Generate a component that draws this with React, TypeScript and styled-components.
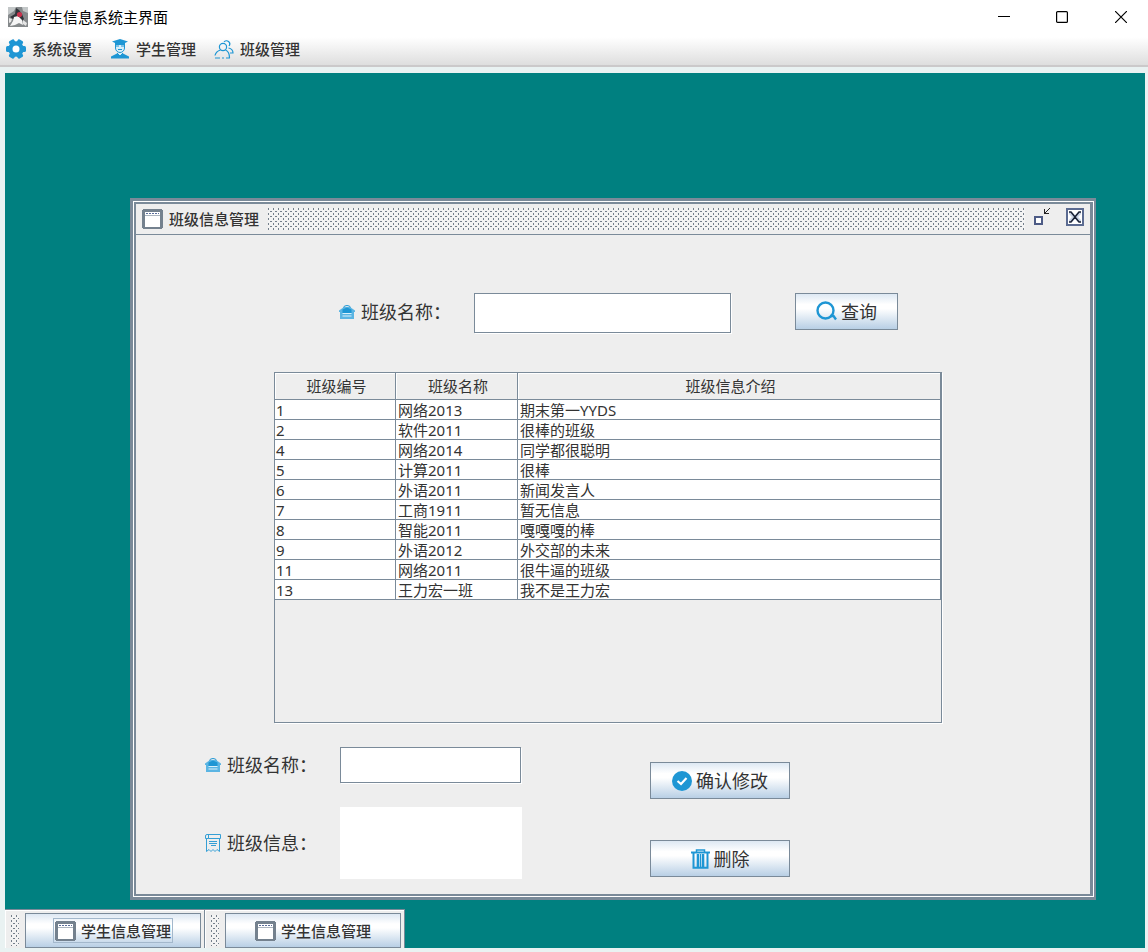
import React from "react";
import styled, { createGlobalStyle, css } from "styled-components";

const steel = "#7a8a99";
const panel = "#eeeeee";
const blue = "#1e96d4";

const GlobalStyle = createGlobalStyle`
  *, *::before, *::after { box-sizing: border-box; }
  body {
    margin: 0;
    background: #fff;
    color: #333;
    font-family: "Noto Sans", "Noto Sans CJK SC", sans-serif;
    font-size: 15px;
    line-height: 20px;
  }
  button, input, textarea { font: inherit; color: inherit; }
`;

const bumps = css`
  background-color: #f3f3f3;
  background-image: url("data:image/svg+xml,%3Csvg xmlns='http://www.w3.org/2000/svg' width='5' height='5' shape-rendering='crispEdges'%3E%3Cpath fill='%23747f8b' d='M0 0h1v2H0zM2 3h2v1H2z'/%3E%3C/svg%3E");
`;

const AppWindow = styled.div`
  min-height: 100vh;
  display: flex;
  flex-direction: column;
  background: #e9f2f2;
`;

const WindowBar = styled.header`
  display: flex;
  align-items: center;
  gap: 5px;
  height: 34px;
  padding: 0 20px 0 8px;
  background: #fff;
`;

const WindowTitle = styled.h1`
  flex: 1;
  margin: 0;
  font-size: 15px;
  font-weight: 400;
  color: #000;
`;

const WindowControls = styled.div`
  display: flex;
  gap: 34px;
`;

const ControlButton = styled.button`
  display: flex;
  align-items: center;
  justify-content: center;
  width: 24px;
  height: 24px;
  padding: 0;
  border: 0;
  background: transparent;

  &:last-child { width: 14px; margin-left: 6px; }
`;

const MenuBar = styled.nav`
  display: flex;
  gap: 18px;
  height: 33px;
  padding: 0 6px;
  background: linear-gradient(#fff 10%, #dedede);
  border-bottom: 2px solid #cbc9ca;
`;

const MenuButton = styled.button`
  display: flex;
  align-items: center;
  gap: 6px;
  height: 29px;
  padding: 0;
  border: 0;
  background: transparent;
  font-weight: 500;
`;

const Desktop = styled.main`
  flex: 1;
  display: flex;
  flex-direction: column;
  margin: 6px 3px 4px 5px;
  background: #008080;
`;

const InternalFrame = styled.section`
  flex: 1;
  display: flex;
  margin: 125px 49px 9px 125px;
  padding: 1px;
  background: #fff;
  border: solid ${steel};
  border-width: 3px 2px 3px 3px;
`;

const FrameBody = styled.div`
  flex: 1;
  display: flex;
  flex-direction: column;
  background: ${panel};
  border: solid ${steel};
  border-width: 2px 3px 2px 2px;
`;

const FrameTitleBar = styled.header`
  display: flex;
  align-items: center;
  gap: 6px;
  height: 31px;
  padding: 0 5px 0 6px;
  border-bottom: 1px solid ${steel};
`;

const FrameTitle = styled.h2`
  margin: 0;
  font-size: 15px;
  font-weight: 500;
`;

const TitleBumps = styled.div`
  flex: 1;
  height: 22px;
  margin-left: 3px;
  ${bumps}
`;

const FrameControl = styled.button`
  display: flex;
  width: 20px;
  height: 22px;
  margin-left: 2px;
  padding: 0;
  border: 0;
  background: transparent;

  & + & { margin-left: 6px; }
`;

const Content = styled.div`
  flex: 1;
  display: flex;
  flex-direction: column;
  padding: 58px 0 15px;
`;

const SearchRow = styled.form`
  display: flex;
  align-items: flex-start;
  margin-left: 203px;
`;

const FieldLabel = styled.label`
  display: flex;
  align-items: center;
  gap: 6px;
  width: 135px;
  height: 38px;
  font-size: 18px;
  line-height: 24px;
`;

const inputFrame = css`
  display: block;
  padding: 0 4px;
  border: 1px solid ${steel};
  border-radius: 0;
  background: #fff;
  box-shadow: 1px 1px 0 #fff;
  font-size: 18px;
  outline: 0;
`;

const TextInput = styled.input<{ $width: number; $height: number }>`
  ${inputFrame}
  width: ${(p) => p.$width}px;
  height: ${(p) => p.$height}px;
`;

const TextArea = styled.textarea`
  ${inputFrame}
  width: 182px;
  height: 72px;
  border: 0;
  box-shadow: none;
  resize: none;
`;

const metal = css`
  display: flex;
  align-items: center;
  justify-content: center;
  padding: 0;
  border: 1px solid ${steel};
  border-radius: 0;
  background: linear-gradient(#dde8f3, #fff 30%, #fff 42%, #b8cfe5);
`;

const ActionButton = styled.button<{ $width: number }>`
  ${metal}
  gap: 4px;
  width: ${(p) => p.$width}px;
  height: 37px;
  font-size: 18px;
  line-height: 24px;
`;

const SearchAction = styled.div`
  margin-left: 64px;
`;

const ScrollPane = styled.div`
  flex: 1;
  min-height: 260px;
  margin: 39px 148px 24px 138px;
  border: 1px solid ${steel};
  box-shadow: 1px 1px 0 #fff;
`;

const DataTable = styled.table`
  width: 100%;
  table-layout: fixed;
  border-collapse: separate;
  border-spacing: 0;

  th, td {
    border: solid ${steel};
    border-width: 0 1px 1px 0;
    white-space: nowrap;
    overflow: hidden;
  }
  th {
    height: 27px;
    padding: 0 1px 0 4px;
    font-weight: 400;
    box-shadow: inset 1px 1px 0 #fff;
    background: ${panel};
  }
  td {
    height: 20px;
    padding: 2px 1px 0 2px;
    line-height: 17px;
    background: #fff;
  }
  td:first-child { padding-left: 1px; }
`;

const Column = styled.col<{ $width?: number }>`
  width: ${(p) => (p.$width ? `${p.$width}px` : "auto")};
`;

const EditArea = styled.form`
  display: flex;
  align-items: flex-start;
  gap: 128px;
  margin-left: 69px;
`;

const FieldStack = styled.div`
  display: flex;
  flex-direction: column;
  gap: 24px;
`;

const Field = styled.div`
  display: flex;
  align-items: center;
  height: 36px;

  & + & { height: 72px; }
`;

const ButtonStack = styled.div`
  display: flex;
  flex-direction: column;
  gap: 41px;
  padding-top: 15px;
`;

const TaskBar = styled.footer`
  display: flex;
`;

const TaskItem = styled.div`
  display: flex;
  align-items: stretch;
  gap: 6px;
  width: 200px;
  height: 39px;
  padding: 3px 3px 0 6px;
  border: solid ${steel};
  border-width: 1px 1px 0 0;
  background: ${panel};
  box-shadow: inset 1px 1px 0 #fff;
`;

const TaskGrip = styled.div`
  width: 8px;
  margin: 2px 0;
  ${bumps}
`;

const TaskButton = styled.button`
  ${metal}
  flex: 1;
`;

const TaskCaption = styled.span<{ $focused?: boolean }>`
  display: flex;
  align-items: center;
  gap: 5px;
  height: 25px;
  padding: 0 1px;
  border: 1px solid ${(p) => (p.$focused ? "#a3b8cc" : "transparent")};
  font-weight: 500;
`;

const DukeIcon = () => (
  <svg width="20" height="20" viewBox="0 0 20 20" aria-hidden="true">
    <rect width="20" height="20" fill="#85898b" />
    <path d="M0 0h8L6 4 0 8zM14 0h6v6l-5-2z" fill="#c3c7c8" />
    <path d="M8 1l3 2 3 4 2 5-2 2-4-3-5 1-3-2 5-3z" fill="#30343a" />
    <path d="M6 10l4-1 4 4 1 5-4-2-4 2-5 1 3-5z" fill="#f5f5f5" />
    <path d="M15 13l4 3-1 3-3-2zM1 11l3 1-1 3-2 1z" fill="#e6e6e6" />
    <circle cx="11.500" cy="7.500" r="2.600" fill="#c8324c" />
  </svg>
);

const GearIcon = () => (
  <svg width="20" height="20" viewBox="0 0 20 20" aria-hidden="true">
    <g fill={blue}>
      <circle cx="10" cy="10" r="7.800" />
      <rect x="0" y="7" width="20" height="6" rx="1.500" />
      <rect x="0" y="7" width="20" height="6" rx="1.500" transform="rotate(60 10 10)" />
      <rect x="0" y="7" width="20" height="6" rx="1.500" transform="rotate(120 10 10)" />
    </g>
    <circle cx="10" cy="10" r="3.500" fill="#fff" />
  </svg>
);

const StudentIcon = () => (
  <svg width="20" height="20" viewBox="0 0 20 20" aria-hidden="true">
    <path d="M2 2.500L10 0l8 2.500L15 4v2H5V4z" fill={blue} />
    <path d="M5.500 6v3a4.500 4.500 0 0 0 9 0V6" fill="#d8eef9" stroke={blue} />
    <path d="M6 7h3M11 7h3M8 10.500h4" stroke={blue} />
    <path d="M1 19.500v-2l6-3 3 2 3-2 6 3v2z" fill={blue} />
    <path d="M7 14l3 3 3-3" fill="#d8eef9" stroke={blue} />
  </svg>
);

const GroupIcon = () => (
  <svg width="20" height="20" viewBox="0 0 20 20" fill="none" stroke={blue} strokeWidth="1.200" aria-hidden="true">
    <circle cx="9" cy="8" r="3.600" />
    <path d="M10 3a3.200 3.200 0 1 1 5 4M14.500 9c2.500.5 4.500 2.500 4.500 5h-3M6.500 11c-3 1-5 3-5.500 5.500" />
    <path d="M11.500 11c2.500 1 4 4 4 8" />
    <path d="M1 19h5M8 19h2M12 19h4" />
  </svg>
);

const FrameIcon = () => (
  <svg width="21" height="20" viewBox="0 0 21 20" shapeRendering="crispEdges" aria-hidden="true">
    <path d="M1 0h19v1h1v18h-1v1H1v-1H0V1h1z" fill="#74818e" />
    <path d="M3 3h15v3H3zM3 7h15v11H3z" fill="#fff" />
    <path d="M4 4.500h13" stroke="#5a6d9a" strokeDasharray="2 1" />
    <path d="M3 6.500h15" stroke="#aab4bf" />
  </svg>
);

const HouseIcon = () => (
  <svg width="16" height="14" viewBox="0 0 16 14" aria-hidden="true">
    <path d="M4.500 3a3.500 2.500 0 0 1 7 0" fill="none" stroke={blue} />
    <path d="M0 5.500L5 2h6l5 3.500V7h-1v7H1V7H0z" fill="#5bb5e3" />
    <path d="M3.500 4.500L8 2.500l4.500 2V8h-9z" fill={blue} />
    <path d="M3.500 8.500h9M3.500 11h9" stroke="#d9f0fb" />
  </svg>
);

const NoteIcon = () => (
  <svg width="16" height="18" viewBox="0 0 16 18" fill="none" stroke="#359fd5" aria-hidden="true">
    <path d="M3.500 4.500h12v-4H2a1.500 1.500 0 0 0-1.500 1.500v2.500h3V1" />
    <path d="M1.500 4.500v13l2.500-2 2 2 2-2 2 2 2-2 2.500 2v-13" />
    <path d="M4 7.500h8M4 9.500h8M6 11.500h5" />
  </svg>
);

const SearchIcon = () => (
  <svg width="21" height="21" viewBox="0 0 21 21" fill="none" stroke={blue} strokeWidth="2.400" aria-hidden="true">
    <circle cx="9.500" cy="9.500" r="8" />
    <path d="M14 15h3.500L20 18.500" />
  </svg>
);

const CheckIcon = () => (
  <svg width="20" height="20" viewBox="0 0 20 20" aria-hidden="true">
    <circle cx="10" cy="10" r="10" fill={blue} />
    <path d="M5.500 10l3.500 3L14.500 7" fill="none" stroke="#fff" strokeWidth="2.200" />
  </svg>
);

const TrashIcon = () => (
  <svg width="19" height="20" viewBox="0 0 19 20" fill="none" stroke={blue} aria-hidden="true">
    <path d="M0 3.500h19" strokeWidth="2" />
    <path d="M5.500 3V1h8v2" strokeWidth="1.500" />
    <path d="M2.500 4v14.800h14V4" strokeWidth="2" />
    <path d="M7 5v13M12 5v13" strokeWidth="2.600" />
    <path d="M9.500 5v13" strokeWidth="1" />
  </svg>
);

const rows = [
  ["1", "网络2013", "期末第一YYDS"],
  ["2", "软件2011", "很棒的班级"],
  ["4", "网络2014", "同学都很聪明"],
  ["5", "计算2011", "很棒"],
  ["6", "外语2011", "新闻发言人"],
  ["7", "工商1911", "暂无信息"],
  ["8", "智能2011", "嘎嘎嘎的棒"],
  ["9", "外语2012", "外交部的未来"],
  ["11", "网络2011", "很牛逼的班级"],
  ["13", "王力宏一班", "我不是王力宏"],
];

export default function App() {
  return (
    <>
      <GlobalStyle />
      <AppWindow>
        <WindowBar>
          <DukeIcon />
          <WindowTitle>学生信息系统主界面</WindowTitle>
          <WindowControls>
            <ControlButton type="button" aria-label="最小化">
              <svg width="12" height="12" shapeRendering="crispEdges"><path d="M0 5.500h12" stroke="#000" /></svg>
            </ControlButton>
            <ControlButton type="button" aria-label="最大化">
              <svg width="12" height="12"><rect x=".6" y=".6" width="10.800" height="10.800" rx="1" fill="none" stroke="#000" strokeWidth="1.200" /></svg>
            </ControlButton>
            <ControlButton type="button" aria-label="关闭">
              <svg width="12" height="12"><path d="M0 0l12 12M12 0L0 12" stroke="#000" strokeWidth="1.200" /></svg>
            </ControlButton>
          </WindowControls>
        </WindowBar>
        <MenuBar>
          <MenuButton type="button"><GearIcon />系统设置</MenuButton>
          <MenuButton type="button"><StudentIcon />学生管理</MenuButton>
          <MenuButton type="button"><GroupIcon />班级管理</MenuButton>
        </MenuBar>
        <Desktop>
          <InternalFrame>
            <FrameBody>
              <FrameTitleBar>
                <FrameIcon />
                <FrameTitle>班级信息管理</FrameTitle>
                <TitleBumps />
                <FrameControl type="button" aria-label="还原">
                  <svg width="20" height="20" shapeRendering="crispEdges">
                    <rect x="2" y="9" width="7" height="7" fill="#fff" stroke="#4d5b85" strokeWidth="2" />
                    <path d="M11 1v5h5v-1h-3v-1h1v-1h1v-1h1v-1h1v-1h-1v1h-1v1h-1v1h-1v1h-1v-3z" fill="#222" />
                  </svg>
                </FrameControl>
                <FrameControl type="button" aria-label="关闭窗口">
                  <svg width="20" height="20">
                    <rect x="2" y="1" width="16" height="16" fill="#fff" stroke="#5b6b91" strokeWidth="2" />
                    <path d="M4 4h3l3 3 3-3h3v2l-3 3 3 3v2h-3l-3-3-3 3H4v-2l3-3-3-3z" fill="#c9d4e6" />
                    <path d="M4 4h2l8 10h2M16 4h-2L6 14H4" fill="none" stroke="#182034" strokeWidth="1.500" />
                  </svg>
                </FrameControl>
              </FrameTitleBar>
              <Content>
                <SearchRow>
                  <FieldLabel htmlFor="query"><HouseIcon />班级名称：</FieldLabel>
                  <TextInput id="query" $width={257} $height={40} />
                  <SearchAction>
                    <ActionButton type="button" $width={103}><SearchIcon />查询</ActionButton>
                  </SearchAction>
                </SearchRow>
                <ScrollPane>
                  <DataTable>
                    <colgroup><Column $width={121} /><Column $width={122} /><Column /></colgroup>
                    <thead>
                      <tr><th>班级编号</th><th>班级名称</th><th>班级信息介绍</th></tr>
                    </thead>
                    <tbody>
                      {rows.map(([id, name, info]) => (
                        <tr key={id}><td>{id}</td><td>{name}</td><td>{info}</td></tr>
                      ))}
                    </tbody>
                  </DataTable>
                </ScrollPane>
                <EditArea>
                  <FieldStack>
                    <Field>
                      <FieldLabel htmlFor="class-name"><HouseIcon />班级名称：</FieldLabel>
                      <TextInput id="class-name" $width={181} $height={36} />
                    </Field>
                    <Field>
                      <FieldLabel htmlFor="class-info"><NoteIcon />班级信息：</FieldLabel>
                      <TextArea id="class-info" />
                    </Field>
                  </FieldStack>
                  <ButtonStack>
                    <ActionButton type="button" $width={140}><CheckIcon />确认修改</ActionButton>
                    <ActionButton type="button" $width={140}><TrashIcon />删除</ActionButton>
                  </ButtonStack>
                </EditArea>
              </Content>
            </FrameBody>
          </InternalFrame>
          <TaskBar>
            <TaskItem>
              <TaskGrip />
              <TaskButton type="button"><TaskCaption $focused><FrameIcon />学生信息管理</TaskCaption></TaskButton>
            </TaskItem>
            <TaskItem>
              <TaskGrip />
              <TaskButton type="button"><TaskCaption><FrameIcon />学生信息管理</TaskCaption></TaskButton>
            </TaskItem>
          </TaskBar>
        </Desktop>
      </AppWindow>
    </>
  );
}
